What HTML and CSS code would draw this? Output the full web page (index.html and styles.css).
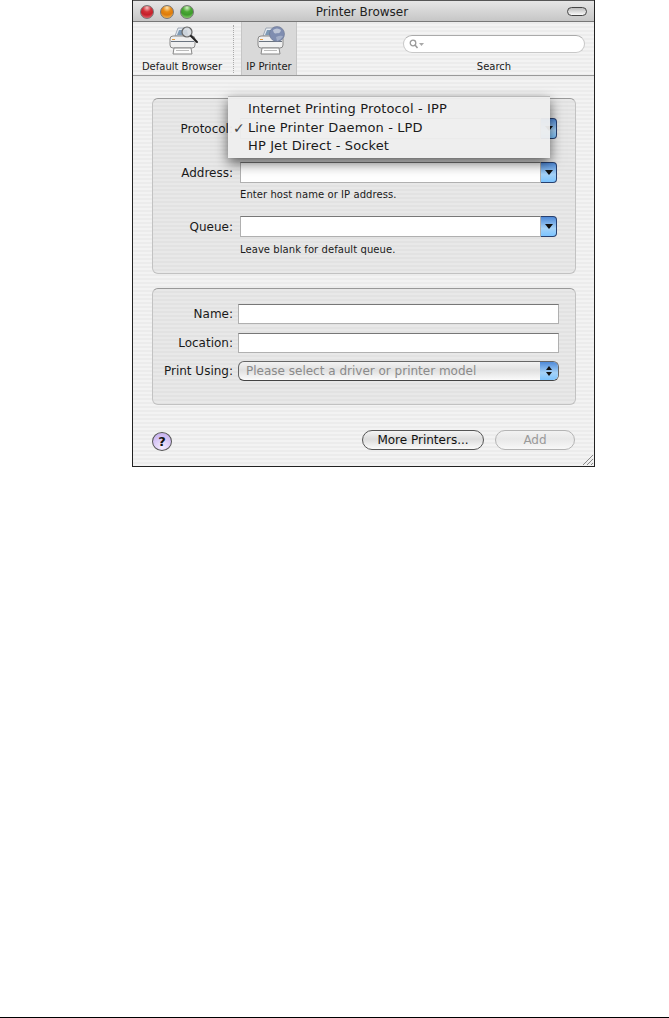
FILE: index.html
```html
<!DOCTYPE html>
<html>

<head>
    <title>Printer Browser</title>
    <link rel="stylesheet" href="styles.css">
</head>

<body>
    <div class="page">
        <div class="window">
            <div class="titlebar">
                <div class="lights">
                    <span class="light red"></span>
                    <span class="light orange"></span>
                    <span class="light green"></span>
                </div>
                <div class="title">Printer Browser</div>
                <span class="pill"></span>
            </div>

            <div class="toolbar">
                <div class="tool toolDefault">
                    <svg class="toolIcon" width="34" height="32" viewBox="0 0 34 32">
                        <g transform="translate(2 0)">
                            <path d="M8 10 L11 2 H23 L25 10 Z" fill="#e6ebf1" stroke="#8f9aa8" stroke-width="0.8" />
                            <path d="M10 9 L12 4 H20 L21 9 Z" fill="#7f9ab5" />
                            <rect x="3" y="10" width="25" height="12" rx="3" fill="#efefef" stroke="#888" />
                            <rect x="4" y="15" width="23" height="1" fill="#6b7480" />
                            <rect x="5" y="13" width="3" height="1" fill="#e69a3c" />
                            <path d="M7 22 H24 L25 28 H6 Z" fill="#fcfcfc" stroke="#888" />
                            <rect x="9" y="24" width="13" height="1" fill="#bbb" />
                            <circle cx="20" cy="6" r="5" fill="#d8dde2" fill-opacity="0.85" stroke="#666" stroke-width="1.2" />
                            <path d="M24 10 L30 16" stroke="#222" stroke-width="2" stroke-linecap="round" />
                        </g>
                    </svg>
                    <span class="toolLabel">Default Browser</span>
                </div>
                <div class="toolSep"></div>
                <div class="tool toolIp">
                    <svg class="toolIcon" width="34" height="32" viewBox="0 0 34 32">
                        <g transform="translate(4 0)">
                            <path d="M7 10 L10 2 H22 L24 10 Z" fill="#e6ebf1" stroke="#8f9aa8" stroke-width="0.8" />
                            <path d="M9 9 L11 4 H19 L20 9 Z" fill="#7f9ab5" />
                            <rect x="2" y="10" width="25" height="12" rx="3" fill="#f0f0f0" stroke="#888" />
                            <rect x="3" y="15" width="23" height="1" fill="#6b7480" />
                            <rect x="4" y="13" width="3" height="1" fill="#e69a3c" />
                            <path d="M6 22 H23 L24 28 H5 Z" fill="#fcfcfc" stroke="#888" />
                            <rect x="8" y="24" width="13" height="1" fill="#bbb" />
                            <circle cx="21" cy="8" r="7.5" fill="#7f8db0" stroke="#6b7690" stroke-width="0.6" />
                            <path d="M17 4 Q21 1 25 4 Q24 8 21 7 Q18 9 17 4 Z" fill="#bcc4d6" />
                            <path d="M20 11 Q24 9 27 10 Q25 14 21 15 Z" fill="#a2adc6" />
                        </g>
                    </svg>
                    <span class="toolLabel">IP Printer</span>
                </div>
                <div class="tool toolSearch">
                    <div class="searchBox">
                        <svg width="16" height="10" viewBox="0 0 16 10">
                            <circle cx="4" cy="4" r="2.8" fill="none" stroke="#9a9a9a" stroke-width="1.3" />
                            <path d="M6 6 L8.5 9" stroke="#9a9a9a" stroke-width="1.5" />
                            <path d="M10 4 H15 L12.5 7 Z" fill="#a8a8a8" />
                        </svg>
                    </div>
                    <span class="toolLabel">Search</span>
                </div>
            </div>

            <div class="content">
                <div class="panel panelTop">
                    <div class="row">
                        <label class="label">Protocol:</label>
                        <div class="combo"><div class="comboText"></div><div class="comboBtn"><i class="arrowDown"></i></div></div>
                    </div>
                    <div class="row rowAddress">
                        <label class="label">Address:</label>
                        <div class="combo"><div class="comboText"></div><div class="comboBtn"><i class="arrowDown"></i></div></div>
                    </div>
                    <div class="hint">Enter host name or IP address.</div>
                    <div class="row rowQueue">
                        <label class="label">Queue:</label>
                        <div class="combo"><div class="comboText"></div><div class="comboBtn"><i class="arrowDown"></i></div></div>
                    </div>
                    <div class="hint hintQueue">Leave blank for default queue.</div>
                </div>

                <div class="panel panelBottom">
                    <div class="row2">
                        <label class="label">Name:</label>
                        <div class="textField"></div>
                    </div>
                    <div class="row2 rowLocation">
                        <label class="label">Location:</label>
                        <div class="textField"></div>
                    </div>
                    <div class="row2 rowUsing">
                        <label class="label">Print Using:</label>
                        <div class="popup">
                            <span class="popupText">Please select a driver or printer model</span>
                            <div class="popupBtn"><i class="arrowUp"></i><i class="arrowDown small"></i></div>
                        </div>
                    </div>
                </div>

                <div class="actions">
                    <div class="help">?</div>
                    <div class="btn btnMore">More Printers...</div>
                    <div class="btn btnAdd">Add</div>
                </div>
            </div>

            <div class="menu">
                <div class="menuItem">Internet Printing Protocol - IPP</div>
                <div class="menuItem"><span class="check">✓</span>Line Printer Daemon - LPD</div>
                <div class="menuItem">HP Jet Direct - Socket</div>
            </div>

            <svg class="grip" width="12" height="12" viewBox="0 0 12 12">
                <path d="M1 11 L11 1 M5 11 L11 5 M9 11 L11 9" stroke="#8a8a8a" stroke-width="1" />
            </svg>
        </div>
        <div class="rule"></div>
    </div>
</body>

</html>
```

FILE: styles.css
```css
html, body {
    margin: 0;
    padding: 0;
    background-color: #fff;
}

body {
    font-family: "DejaVu Sans", sans-serif;
    color: #1a1a1a;
}

.page {
    height: 1018px;
    display: flex;
    flex-direction: column;
}

.window {
    position: relative;
    width: 461px;
    height: 466px;
    margin-left: 132px;
    border: 1px solid #222;
    border-top: none;
    background-color: #f0f0f0;
    background-image: repeating-linear-gradient(to bottom, #f3f3f3 0, #f3f3f3 2px, #ececec 2px, #ececec 4px);
}

.titlebar {
    display: flex;
    align-items: center;
    height: 19px;
    padding-top: 1px;
    border-top: 1px solid #555;
    border-bottom: 1px solid #777;
    background: linear-gradient(to bottom, #e6e6e6, #c6c6c6);
}

.lights {
    display: flex;
    gap: 6px;
    margin-left: 7px;
}

.light {
    width: 14px;
    height: 14px;
    border-radius: 50%;
    border: 1px solid #777;
    box-sizing: border-box;
}

.red {
    background: radial-gradient(circle at 50% 15%, #f4c4c4 0, #d23038 35%, #c4202a 60%, #f0808a 100%);
}

.orange {
    background: radial-gradient(circle at 50% 15%, #fbe6b8 0, #e88a12 35%, #dd7a0c 60%, #ffd070 100%);
}

.green {
    background: radial-gradient(circle at 50% 15%, #d4f0c4 0, #4aa834 35%, #3d9a2c 60%, #a6e88a 100%);
}

.title {
    flex: 1;
    text-align: center;
    font-size: 12px;
    color: #222;
    margin-left: -37px;
}

.pill {
    width: 18px;
    height: 7px;
    margin-right: 7px;
    border: 1px solid #444;
    border-radius: 5px;
    background: linear-gradient(to bottom, #bbb, #fafafa);
}

.toolbar {
    display: flex;
    height: 53px;
    border-bottom: 1px solid #999;
}

.tool {
    display: flex;
    flex-direction: column;
    align-items: center;
    justify-content: flex-end;
    padding-bottom: 2px;
    box-sizing: border-box;
}

.toolDefault {
    width: 98px;
    margin-right: 2px;
}

.toolIcon {
    margin-bottom: 2px;
}

.toolLabel {
    font-size: 10px;
    line-height: 13px;
    color: #1a1a1a;
}

.toolSep {
    width: 0;
    margin: 3px 0 2px;
    border-left: 1px dotted #aaa;
}

.toolIp {
    width: 56px;
    margin-left: 7px;
    background-color: #d9d9d9;
    border-left: 1px solid #c6c6c6;
    border-right: 1px solid #c6c6c6;
}

.toolSearch {
    width: 182px;
    margin-left: auto;
    margin-right: 9px;
}

.searchBox {
    width: 182px;
    height: 18px;
    margin-bottom: 7px;
    box-sizing: border-box;
    padding: 3px 0 0 5px;
    border: 1px solid #c8c8c8;
    border-top-color: #aaa;
    border-radius: 9px;
    background-color: #fff;
    line-height: 0;
}

.content {
    padding: 22px 18px 0 19px;
    background-image: linear-gradient(to bottom, #e8e8e8, rgba(232, 232, 232, 0) 4px);
}

.panel {
    border: 1px solid #c2c2c2;
    border-top-color: #999;
    border-radius: 6px;
    background-color: #e4e4e4;
    background-image: repeating-linear-gradient(to bottom, #e8e8e8 0, #e8e8e8 2px, #e2e2e2 2px, #e2e2e2 4px);
}

.panelTop {
    height: 176px;
    box-sizing: border-box;
    padding-top: 19px;
}

.panelBottom {
    height: 117px;
    box-sizing: border-box;
    margin-top: 14px;
    padding-top: 15px;
}

.row {
    display: grid;
    grid-template-columns: 81px 317px;
    column-gap: 6px;
    align-items: center;
    height: 21px;
}

.rowAddress {
    margin-top: 23px;
}

.rowQueue {
    margin-top: 14px;
}

.row2 {
    display: grid;
    grid-template-columns: 80px 321px;
    column-gap: 5px;
    align-items: center;
    height: 20px;
}

.rowLocation {
    margin-top: 9px;
}

.rowUsing {
    margin-top: 8px;
}

.label {
    font-size: 12px;
    text-align: right;
    color: #1a1a1a;
}

.row .label {
    padding-right: 1px;
}

.combo {
    display: flex;
    height: 21px;
}

.comboText {
    flex: 1;
    background-color: #fff;
    border: 1px solid #b0b0b0;
    border-top-color: #777;
}

.comboBtn {
    display: flex;
    align-items: center;
    justify-content: center;
    width: 16px;
    border: 1px solid #27406f;
    border-left: none;
    border-radius: 0 4px 4px 0;
    background: linear-gradient(to bottom, #4f8ad8, #a5d2f7 60%, #7cc4ff);
    box-sizing: border-box;
}

.arrowDown {
    display: block;
    width: 0;
    height: 0;
    border-left: 4px solid transparent;
    border-right: 4px solid transparent;
    border-top: 5px solid #111;
}

.arrowDown.small {
    border-left-width: 3px;
    border-right-width: 3px;
    border-top-width: 4px;
    margin-top: 2px;
}

.arrowUp {
    display: block;
    width: 0;
    height: 0;
    border-left: 3px solid transparent;
    border-right: 3px solid transparent;
    border-bottom: 4px solid #111;
}

.hint {
    margin: 5px 0 0 87px;
    font-size: 10px;
    letter-spacing: 0.07px;
    line-height: 14px;
    color: #1a1a1a;
}

.hintQueue {
    margin-top: 6px;
}

.textField {
    height: 20px;
    box-sizing: border-box;
    background-color: #fff;
    border: 1px solid #b0b0b0;
    border-top-color: #777;
}

.popup {
    display: flex;
    align-items: center;
    height: 20px;
    box-sizing: border-box;
    border: 1px solid #666;
    border-bottom-color: #444;
    border-radius: 6px;
    background: linear-gradient(to bottom, #f2f2f2, #e0e0e0 45%, #fbfbfb);
    overflow: hidden;
}

.popupText {
    flex: 1;
    padding-left: 7px;
    font-size: 12px;
    color: #8a8a8a;
}

.popupBtn {
    display: flex;
    flex-direction: column;
    align-items: center;
    justify-content: center;
    width: 18px;
    height: 100%;
    background: linear-gradient(to bottom, #4f8ad8, #a5d2f7 60%, #7cc4ff);
}

.actions {
    display: flex;
    align-items: center;
    margin-top: 23px;
}

.help {
    width: 20px;
    height: 19px;
    margin-top: 4px;
    box-sizing: border-box;
    border: 1px solid #555;
    border-radius: 50%;
    background: radial-gradient(circle at 50% 85%, #f4ecff, #c9b4f0 80%);
    font-size: 13px;
    font-weight: 700;
    line-height: 17px;
    text-align: center;
    color: #111;
}

.btn {
    height: 20px;
    box-sizing: border-box;
    border-radius: 10px;
    font-size: 12px;
    line-height: 18px;
    text-align: center;
    background: linear-gradient(to bottom, #f4f4f4, #dcdcdc 45%, #fbfbfb);
}

.btnMore {
    width: 122px;
    margin-left: 190px;
    border: 1px solid #555;
    color: #111;
}

.btnAdd {
    width: 80px;
    margin-left: 11px;
    border: 1px solid #b4b4b4;
    color: #9a9a9a;
    background: linear-gradient(to bottom, #f2f2f2, #e8e8e8 45%, #f8f8f8);
}

.menu {
    position: absolute;
    top: 96px;
    left: 95px;
    width: 322px;
    height: 62px;
    box-sizing: border-box;
    padding-top: 3px;
    background-color: rgba(238, 238, 238, 0.95);
    border-top: 1px solid #bbb;
    box-shadow: 0 5px 12px rgba(0, 0, 0, 0.6);
}

.menuItem {
    position: relative;
    padding-left: 20px;
    font-size: 13px;
    letter-spacing: 0.13px;
    line-height: 18.5px;
    color: #1a1a1a;
}

.check {
    position: absolute;
    left: 5px;
    font-size: 14px;
    color: #444;
}

.grip {
    position: absolute;
    right: 0;
    bottom: 0;
}

.rule {
    margin-top: auto;
    height: 1px;
    background-color: #000;
}
```
